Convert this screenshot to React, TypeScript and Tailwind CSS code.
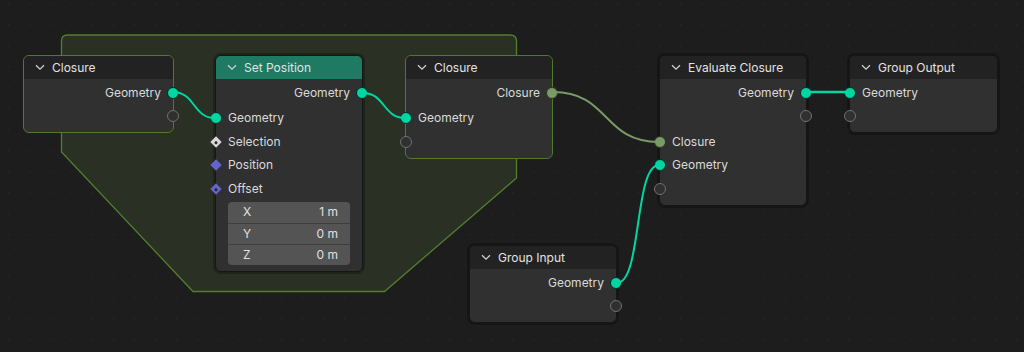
import React from 'react';

type Kind = 'geo' | 'empty' | 'closure' | 'vec' | 'vecDot' | 'boolDot';

function Socket({ kind, side }: { kind: Kind; side: 'in' | 'out' }) {
  const pos = side === 'in' ? 'left-[-6px]' : 'right-[-6px]';
  if (kind === 'vec' || kind === 'vecDot' || kind === 'boolDot') {
    const fill = kind === 'boolDot' ? 'bg-[#dcd6de]' : 'bg-[#6464cc]';
    return (
      <span className={`absolute ${pos} top-1/2 -translate-y-1/2 w-[12px] h-[12px] flex items-center justify-center`}>
        <span className={`w-[8px] h-[8px] rotate-45 ${fill} flex items-center justify-center`}>
          {kind !== 'vec' && <span className="w-[3px] h-[3px] rounded-full bg-[#2a2a2a]" />}
        </span>
      </span>
    );
  }
  const cls =
    kind === 'geo'
      ? 'bg-[#00d6a3] border border-[#0a2a22]'
      : kind === 'closure'
      ? 'bg-[#7a9a66] border border-[#2a3326]'
      : 'bg-[#303030] border-[1.5px] border-[#707070]';
  return <span className={`absolute ${pos} top-1/2 -translate-y-1/2 w-[12px] h-[12px] rounded-full ${cls}`} />;
}

function Row({ label, kind, side }: { label?: string; kind: Kind; side: 'in' | 'out' }) {
  return (
    <div className={`relative h-[23.5px] flex items-center px-3 ${side === 'out' ? 'justify-end' : 'justify-start'}`}>
      <span className="text-[12px] text-[#dadada] leading-none">{label}</span>
      <Socket kind={kind} side={side} />
    </div>
  );
}

function Chevron() {
  return (
    <svg width="10" height="7" viewBox="0 0 10 7" className="shrink-0">
      <path d="M1 1.2 L5 5.2 L9 1.2" fill="none" stroke="#cfcfcf" strokeWidth="1.3" />
    </svg>
  );
}

function Node({
  title,
  x,
  y,
  w,
  zoned,
  header = 'bg-[#222222]',
  children,
  pb = 'pb-[4px]',
}: {
  title: string;
  x: number;
  y: number;
  w: number;
  zoned?: boolean;
  header?: string;
  children: React.ReactNode;
  pb?: string;
}) {
  return (
    <div
      className={`absolute rounded-[6px] bg-[#303030] ${
        zoned ? 'border border-[#4f7a2c]' : 'border border-[#161616] shadow-[0_0_0_2px_rgba(0,0,0,0.25)]'
      }`}
      style={{ left: x, top: y, width: w }}
    >
      <div className={`h-[23px] rounded-t-[5px] ${header} flex items-center gap-[7px] pl-[11px]`}>
        <Chevron />
        <span className="text-[12px] text-[#e2e2e2] leading-none">{title}</span>
      </div>
      <div className={`pt-[2px] ${pb} flex flex-col`}>{children}</div>
    </div>
  );
}

function VectorBox() {
  const rows = [
    ['X', '1 m'],
    ['Y', '0 m'],
    ['Z', '0 m'],
  ];
  return (
    <div className="mx-3 mt-[1px] rounded-[4px] bg-[#545454] overflow-hidden flex flex-col">
      {rows.map(([k, v], i) => (
        <div
          key={k}
          className={`h-[21px] flex items-center justify-between pl-[15px] pr-[12px] text-[12px] text-[#e0e0e0] ${
            i > 0 ? 'border-t border-[#3e3e3e]' : ''
          }`}
        >
          <span>{k}</span>
          <span>{v}</span>
        </div>
      ))}
    </div>
  );
}

export default function App() {
  return (
    <div
      className="relative w-[1024px] h-[352px] overflow-hidden bg-[#1d1d1d]"
      style={{ fontFamily: 'Inter, "DejaVu Sans", sans-serif' }}
    >
      <svg className="absolute inset-0" width="1024" height="352">
        <defs>
          <pattern id="grid" width="21" height="21" patternUnits="userSpaceOnUse" x="8" y="3">
            <rect x="0" y="0" width="1.5" height="1.5" fill="#262626" />
          </pattern>
        </defs>
        <rect width="1024" height="352" fill="url(#grid)" />
        <path
          d="M61.5 41 Q61.5 35 67.5 35 L510 35 Q516.5 35 516.5 41 L516.5 178 L384.5 291.5 L193 291.5 L61.5 152 Z"
          fill="#2a3023"
          stroke="#527f2e"
          strokeWidth="1.3"
        />
      </svg>

      <svg className="absolute inset-0 pointer-events-none" width="1024" height="352" style={{ zIndex: 5 }}>
        <path d="M173 92 C195 92 193 118 215 118" fill="none" stroke="#00d6a3" strokeWidth="2" />
        <path d="M363 93 C385 93 383 118 405 118" fill="none" stroke="#00d6a3" strokeWidth="2" />
        <path d="M553 92 C610 92 602 142 659 142" fill="none" stroke="#7a9a66" strokeWidth="2" />
        <path d="M617 283 C642 283 634 165 659 165" fill="none" stroke="#00d6a3" strokeWidth="2" />
        <path d="M807 92 L849 92" fill="none" stroke="#00d6a3" strokeWidth="2.5" />
      </svg>

      <Node title="Closure" x={23} y={55} w={151} zoned>
        <Row label="Geometry" kind="geo" side="out" />
        <Row kind="empty" side="out" />
      </Node>

      <Node title="Set Position" x={215} y={55} w={148} header="bg-[#1f7a62]" pb="pb-[6px]">
        <Row label="Geometry" kind="geo" side="out" />
        <div className="h-[2px]" />
        <Row label="Geometry" kind="geo" side="in" />
        <Row label="Selection" kind="boolDot" side="in" />
        <Row label="Position" kind="vec" side="in" />
        <Row label="Offset" kind="vecDot" side="in" />
        <VectorBox />
      </Node>

      <Node title="Closure" x={405} y={55} w={148} zoned>
        <Row label="Closure" kind="closure" side="out" />
        <div className="h-[2px]" />
        <Row label="Geometry" kind="geo" side="in" />
        <Row kind="empty" side="in" />
      </Node>

      <Node title="Evaluate Closure" x={659} y={55} w={148}>
        <Row label="Geometry" kind="geo" side="out" />
        <Row kind="empty" side="out" />
        <div className="h-[2px]" />
        <Row label="Closure" kind="closure" side="in" />
        <Row label="Geometry" kind="geo" side="in" />
        <Row kind="empty" side="in" />
      </Node>

      <Node title="Group Output" x={849} y={55} w={149}>
        <Row label="Geometry" kind="geo" side="in" />
        <Row kind="empty" side="in" />
      </Node>

      <Node title="Group Input" x={469} y={245} w={148}>
        <Row label="Geometry" kind="geo" side="out" />
        <Row kind="empty" side="out" />
      </Node>
    </div>
  );
}
